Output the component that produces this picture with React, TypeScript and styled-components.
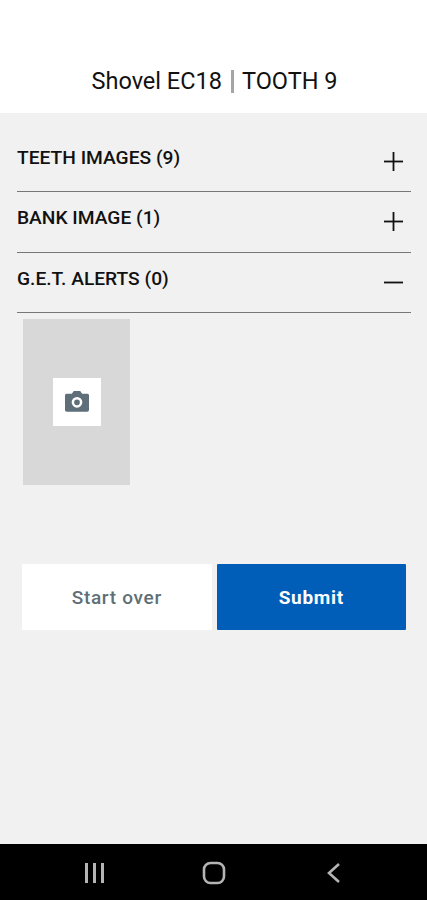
import React from "react";
import styled, { createGlobalStyle } from "styled-components";

const GlobalStyle = createGlobalStyle`
  * {
    box-sizing: border-box;
  }

  body {
    margin: 0;
    font-family: Roboto, "Liberation Sans", sans-serif;
  }
`;

const Screen = styled.div`
  display: flex;
  flex-direction: column;
  height: 900px;
  background-color: #f1f1f1;
`;

const Header = styled.header`
  display: flex;
  justify-content: center;
  align-items: flex-end;
  height: 113px;
  padding: 0 0 18px 2px;
  background-color: #fff;
`;

const Title = styled.h1`
  display: flex;
  align-items: center;
  margin: 0;
  font-size: 23.5px;
  line-height: 28px;
  font-weight: 400;
  color: #111;
  white-space: nowrap;
`;

const Divider = styled.span`
  width: 3px;
  height: 23px;
  margin: 0 8px 0 9px;
  background-color: #a5a5a5;
`;

const Content = styled.main`
  flex: 1;
  padding: 18.5px 16px 0 17px;
`;

const SectionRow = styled.div`
  display: flex;
  justify-content: space-between;
  align-items: flex-start;
  height: 60.5px;
  padding: 14.4px 7px 0 0;
  border-bottom: 1px solid #777;
`;

const SectionTitle = styled.h2`
  margin: 0;
  font-size: 19.2px;
  line-height: 24px;
  font-weight: 500;
  color: #111;
`;

const ToggleIcon = styled.svg`
  display: block;
  width: 21px;
  height: 21px;
  margin-top: 5px;
`;

const PhotoSlot = styled.div`
  display: flex;
  justify-content: center;
  align-items: center;
  width: 107px;
  height: 166px;
  margin: 6px 0 0 6px;
  background-color: #d8d8d8;
`;

const CameraButton = styled.button`
  display: flex;
  justify-content: center;
  align-items: center;
  width: 48px;
  height: 48px;
  padding: 0 0 2px;
  border: none;
  background-color: #fff;
`;

const Actions = styled.div`
  display: flex;
  gap: 5px;
  margin: 79px 5px 0;
`;

const ActionButton = styled.button<{ $primary?: boolean }>`
  flex: 1;
  height: 66px;
  padding: 1px 0 0;
  border: none;
  border-radius: 1px;
  font-family: inherit;
  font-size: 19px;
  font-weight: ${({ $primary }) => ($primary ? 700 : 500)};
  letter-spacing: 0.7px;
  color: ${({ $primary }) => ($primary ? "#fff" : "#5f6f76")};
  background-color: ${({ $primary }) => ($primary ? "#005eb8" : "#fff")};
`;

const NavBar = styled.nav`
  display: flex;
  justify-content: space-between;
  align-items: center;
  height: 56px;
  padding: 2px 81px 0 82px;
  background-color: #000;
`;

const NavIcon = styled.svg`
  display: block;
  width: 24px;
  height: 24px;
  fill: none;
  stroke: #b4b4b4;
`;

interface SectionProps {
  title: string;
  count: number;
  open?: boolean;
}

const Section: React.FC<SectionProps> = ({ title, count, open }) => {
  return (
    <SectionRow>
      <SectionTitle>
        {title} ({count})
      </SectionTitle>
      <ToggleIcon viewBox="0 0 21 21" stroke="#111" strokeWidth="1.8">
        <path d="M1 10.5h19" />
        {!open && <path d="M10.5 1v19" />}
      </ToggleIcon>
    </SectionRow>
  );
};

const CameraIcon: React.FC = () => (
  <svg width="24" height="21" viewBox="0 0 24 21">
    <path
      fill="#5f6f7a"
      d="M8.8 0h6.4l2 2.8h5.3a1.5 1.5 0 0 1 1.500 1.500V19a1.800 1.800 0 0 1-1.800 1.800H1.800A1.800 1.800 0 0 1 0 19V4.300a1.500 1.500 0 0 1 1.500-1.500h5.300z"
    />
    <circle cx="12" cy="11.300" r="4.100" fill="none" stroke="#fff" strokeWidth="2.500" />
  </svg>
);

const App: React.FC = () => {
  return (
    <Screen>
      <GlobalStyle />
      <Header>
        <Title>
          <span>Shovel EC18</span>
          <Divider />
          <span>TOOTH 9</span>
        </Title>
      </Header>
      <Content>
        <Section title="TEETH IMAGES" count={9} />
        <Section title="BANK IMAGE" count={1} />
        <Section title="G.E.T. ALERTS" count={0} open />
        <PhotoSlot>
          <CameraButton>
            <CameraIcon />
          </CameraButton>
        </PhotoSlot>
        <Actions>
          <ActionButton>Start over</ActionButton>
          <ActionButton $primary>Submit</ActionButton>
        </Actions>
      </Content>
      <NavBar>
        <NavIcon viewBox="0 0 24 24" strokeWidth="3">
          <path d="M4.500 2v20M12.500 2v20M20.500 2v20" />
        </NavIcon>
        <NavIcon viewBox="0 0 24 24" strokeWidth="2.600">
          <rect x="2" y="2" width="20" height="20" rx="6.500" />
        </NavIcon>
        <NavIcon viewBox="0 0 24 24" strokeWidth="2.600">
          <path d="M17 3L7 12l10 9" />
        </NavIcon>
      </NavBar>
    </Screen>
  );
};

export default App;
